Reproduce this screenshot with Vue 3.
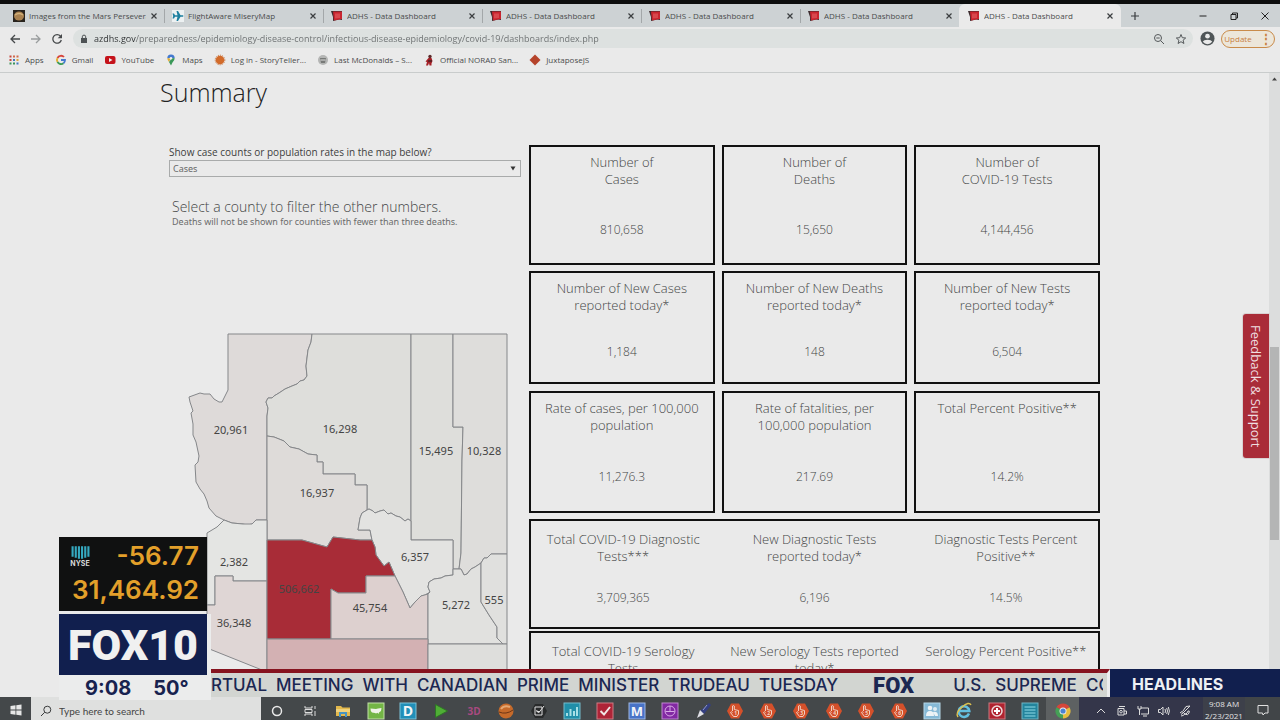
<script setup>
import { ref } from 'vue'

const tabs = [
  { title: 'Images from the Mars Persevera', icon: 'mars' },
  { title: 'FlightAware MiseryMap', icon: 'plane' },
  { title: 'ADHS - Data Dashboard', icon: 'adhs' },
  { title: 'ADHS - Data Dashboard', icon: 'adhs' },
  { title: 'ADHS - Data Dashboard', icon: 'adhs' },
  { title: 'ADHS - Data Dashboard', icon: 'adhs' },
  { title: 'ADHS - Data Dashboard', icon: 'adhs', active: true },
]

const url = ref('azdhs.gov/preparedness/epidemiology-disease-control/infectious-disease-epidemiology/covid-19/dashboards/index.php')

const bookmarks = [
  { title: 'Apps', icon: 'apps' },
  { title: 'Gmail', icon: 'google' },
  { title: 'YouTube', icon: 'youtube' },
  { title: 'Maps', icon: 'maps' },
  { title: 'Log in - StoryTeller...', icon: 'story' },
  { title: 'Last McDonalds – S...', icon: 'mcd' },
  { title: 'Official NORAD San...', icon: 'norad' },
  { title: 'JuxtaposeJS', icon: 'juxta' },
]

const measure = ref('Cases')

const rows = [
  {
    name: 'totals',
    cards: [
      { label: ['Number of', 'Cases'], value: '810,658' },
      { label: ['Number of', 'Deaths'], value: '15,650' },
      { label: ['Number of', 'COVID-19 Tests'], value: '4,144,456' },
    ],
  },
  {
    name: 'today',
    cards: [
      { label: ['Number of New Cases', 'reported today*'], value: '1,184' },
      { label: ['Number of New Deaths', 'reported today*'], value: '148' },
      { label: ['Number of New Tests', 'reported today*'], value: '6,504' },
    ],
  },
  {
    name: 'rates',
    cards: [
      { label: ['Rate of cases, per 100,000', 'population'], value: '11,276.3' },
      { label: ['Rate of fatalities, per', '100,000 population'], value: '217.69' },
      { label: ['Total Percent Positive**'], value: '14.2%' },
    ],
  },
]

const groups = [
  [
    { label: ['Total COVID-19 Diagnostic', 'Tests***'], value: '3,709,365' },
    { label: ['New Diagnostic Tests', 'reported today*'], value: '6,196' },
    { label: ['Diagnostic Tests Percent', 'Positive**'], value: '14.5%' },
  ],
  [
    { label: ['Total COVID-19 Serology', 'Tests'], value: '' },
    { label: ['New Serology Tests reported', 'today*'], value: '' },
    { label: ['Serology Percent Positive**'], value: '' },
  ],
]

const counties = [
  { name: 'Mohave', fill: '#dedad9', value: '20,961', x: 231, y: 434, d: 'M228 334H312L311 342 308 350 307 358 306 366 307 376 304 380 300 381 297 384 292 386 285 389 279 393 274 396 272 398 268 398 266 402 268 408 267 416V520H256L252 524 247 525 243 524 232 523 224 520 216 516 209 508 207 501 204 494 200 489 196 482 195 465 198 462 199 456 196 442 193 435 193 424 191 413 193 411 190 402 189 397 200 393 204 394 210 394 214 399 219 402H222L225 396 228 390Z' },
  { name: 'Coconino', fill: '#dededb', value: '16,298', x: 340, y: 433, d: 'M312 334H411V521L408 519 405 521 400 517 396 516 391 513 388 514 384 510 380 511 375 513 373 511 369 509 367 510V485H355V474H323V462H317V455L308 454 299 449 290 447 284 441 274 437 267 436V416L268 408 266 402 268 398 272 398 274 396 279 393 285 389 292 386 297 384 300 381 304 380 307 376 306 366 307 358 308 350 311 342Z' },
  { name: 'Navajo', fill: '#dededb', value: '15,495', x: 436, y: 455, d: 'M411 334H453V427H463L462 460 461 553 459 569H453V540H411Z' },
  { name: 'Apache', fill: '#dedddb', value: '10,328', x: 484, y: 455, d: 'M453 334H507V554H491L487 558 484 558 481 563 475 567 471 569 467 574 464 575 461 569 459 569 461 553 462 460 463 427H453Z' },
  { name: 'Yavapai', fill: '#dedbd9', value: '16,937', x: 317, y: 497, d: 'M267 436L274 437 284 441 290 447 299 449 308 454 317 455V462H323V474H355V485H367V510L362 513 360 518 358 530H370L372 540H360L333 537 327 547 302 540H267Z' },
  { name: 'Gila', fill: '#e3e3e1', value: '6,357', x: 415, y: 561, d: 'M367 510L369 509 373 511 375 513 380 511 384 510 388 514 391 513 396 516 400 517 405 521 408 519 411 521V540H453V575L445 576 441 578 434 579 429 582 428 587 430 592 425 595 421 596 417 600 415 602 410 608 403 592 395 576 389 562 384 566 376 555 375 547 372 540 370 530H358L360 518 362 513Z' },
  { name: 'La Paz', fill: '#e4e5e3', value: '2,382', x: 234, y: 566, d: 'M224 520L232 523 243 524 252 524 256 520H267V581H233V576H215V605H207V533L217 527Z' },
  { name: 'Yuma', fill: '#dfd6d5', value: '36,348', x: 234, y: 627, d: 'M215 576H233V581H267V672L207 648V605H215Z' },
  { name: 'Maricopa', fill: '#a82c37', value: '506,662', x: 299, y: 593, d: 'M267 540H302L327 547 333 537 360 540H372L375 547 376 555 384 566 389 562 395 576H366V593H338L331 589V639H267Z' },
  { name: 'Pinal', fill: '#ddd0cf', value: '45,754', x: 370, y: 612, d: 'M331 589L338 593H366V576H395L403 592 410 608 415 602 417 600 421 596 428 594V639H331Z' },
  { name: 'Graham', fill: '#e1e1df', value: '5,272', x: 456, y: 609, d: 'M428 594L430 592 428 587 429 582 434 579 441 578 445 576 453 575V569H461L464 575 467 574 471 569 475 567 481 563V602L489 615 497 627V638L503 644H428Z' },
  { name: 'Greenlee', fill: '#e0e0de', value: '555', x: 494, y: 604, d: 'M481 563L484 558 487 558 491 554H507V644H503L497 638V627L489 615 481 602Z' },
  { name: 'Pima', fill: '#d3b1b3', value: '', x: 0, y: 0, d: 'M267 639H428V680H267Z' },
  { name: 'Cochise', fill: '#dededc', value: '', x: 0, y: 0, d: 'M428 644H507V680H428Z' },
]

const apps = [
  'cortana', 'taskview', 'folder', 'map', 'dletter', 'play', 'threed', 'ball', 'check',
  'bars', 'redcheck', 'mletter', 'purple', 'pen',
  'hand1', 'hand2', 'hand3', 'hand4', 'hand5', 'hand6',
  'people', 'ie', 'medic', 'lines', 'chrome',
]

const crawl = [
  'RTUAL  MEETING  WITH  CANADIAN  PRIME  MINISTER  TRUDEAU  TUESDAY',
  'U.S.  SUPREME  CO',
]
</script>

<template>
  <div class="screen">
    <header class="tabstrip">
      <div class="tabs">
        <div v-for="(tab, i) in tabs" :key="i" class="tab" :class="{ active: tab.active }">
          <svg class="fav" viewBox="0 0 12 12" aria-hidden="true">
            <template v-if="tab.icon === 'mars'">
              <rect width="12" height="12" fill="#28231d" />
              <ellipse cx="6" cy="6" rx="5" ry="4.5" fill="#a9814f" />
              <path d="M2 5Q6 2 10 5" stroke="#d2b27c" stroke-width="1.5" fill="none" />
            </template>
            <template v-else-if="tab.icon === 'plane'">
              <rect width="12" height="12" fill="#edf1f2" />
              <path d="M.5 3.500L2 3.500 3 5.200 5.500 5.200 4.500 1H6L8.500 5.200H11Q12 6 11 6.800H8.500L6 11H4.500L5.500 6.800 3 6.800 2 8.500H.5L1.200 6Z" fill="#1d7f9f" />
            </template>
            <template v-else>
              <path d="M0 1H11V10L8 9.500 2 11 2 7Z" fill="#3c2b2e" />
              <path d="M2 1.500H11V9L3 10.500Z" fill="#c9242f" />
              <path d="M4 3.500H9V8L4 8.500Z" fill="#d8474d" />
            </template>
          </svg>
          <span class="tab-title">{{ tab.title }}</span>
          <button class="tab-close" aria-label="Close tab">
            <svg viewBox="0 0 8 8"><path d="M1.500 1.500L6.500 6.500M6.500 1.500L1.500 6.500" /></svg>
          </button>
        </div>
        <button class="new-tab" aria-label="New tab">
          <svg viewBox="0 0 10 10"><path d="M5 1V9M1 5H9" /></svg>
        </button>
      </div>
      <div class="win">
        <button aria-label="Minimize"><svg viewBox="0 0 10 10"><path d="M1.500 5H8.500" /></svg></button>
        <button aria-label="Restore"><svg viewBox="0 0 10 10"><path d="M2 3.500H7V8.500H2ZM3.500 3.500V2H8.500V7H7" /></svg></button>
        <button aria-label="Close"><svg viewBox="0 0 10 10"><path d="M1.500 1.500L8.500 8.500M8.500 1.500L1.500 8.500" /></svg></button>
      </div>
    </header>

    <div class="toolbar">
      <nav class="nav">
        <button aria-label="Back"><svg viewBox="0 0 12 12"><path d="M11 6H2M6 2L2 6L6 10" /></svg></button>
        <button class="dim" aria-label="Forward"><svg viewBox="0 0 12 12"><path d="M1 6H10M6 2L10 6L6 10" /></svg></button>
        <button aria-label="Reload"><svg viewBox="0 0 12 12"><path d="M9.500 3.200A4.300 4.300 0 1 0 10.300 7" /><path class="solid" d="M11 1V5.300H6.700Z" /></svg></button>
      </nav>
      <div class="omni">
        <svg class="lock" viewBox="0 0 8 10"><path d="M1 4H7V9H1Z" fill="#4d5254" /><path d="M2.300 4V2.800A1.700 1.700 0 0 1 5.700 2.800V4" fill="none" stroke="#4d5254" /></svg>
        <input v-model="url" class="url" type="text" aria-label="Address" spellcheck="false">
        <button aria-label="Zoom"><svg viewBox="0 0 12 12"><circle cx="5" cy="5" r="3.500" /><path d="M7.700 7.700L11 11M3.300 5H6.700" /></svg></button>
        <button aria-label="Bookmark"><svg viewBox="0 0 12 12"><path d="M6 1.500L7.300 4.700 10.700 5 8.100 7.200 8.900 10.500 6 8.700 3.100 10.500 3.900 7.200 1.300 5 4.700 4.700Z" /></svg></button>
      </div>
      <button class="avatar" aria-label="Profile">
        <svg viewBox="0 0 16 16"><circle cx="8" cy="8" r="7.500" fill="#4f5557" /><circle cx="8" cy="5.500" r="2.500" fill="#eaeaea" /><path d="M3 11.500Q4 9.200 8 9.200T13 11.500Q11 14 8 14T3 11.500Z" fill="#eaeaea" /></svg>
      </button>
      <button class="update">Update <span>⋮</span></button>
    </div>

    <nav class="bookmarks">
      <a v-for="b in bookmarks" :key="b.title" href="#">
        <svg viewBox="0 0 12 12" aria-hidden="true">
          <g v-if="b.icon === 'apps'">
            <path d="M1.500 2.500H3.500M1.500 6H3.500" stroke="#c6463d" stroke-width="2" />
            <path d="M5 2.500H7M8.500 2.500H10.500" stroke="#d06a4b" stroke-width="2" />
            <path d="M5 6H7M8.500 9.500H10.500" stroke="#4277be" stroke-width="2" />
            <path d="M1.500 9.500H3.500M5 9.500H7" stroke="#3c9458" stroke-width="2" />
            <path d="M8.500 6H10.500" stroke="#d9a63f" stroke-width="2" />
          </g>
          <g v-else-if="b.icon === 'google'" fill="none" stroke-width="1.800">
            <path d="M9 3A4 4 0 0 0 2.500 4" stroke="#d7443b" />
            <path d="M2.500 4A4 4 0 0 0 2.500 8" stroke="#e2ae2c" />
            <path d="M2.500 8A4 4 0 0 0 8.500 9.200" stroke="#3b9b56" />
            <path d="M8.500 9.200Q10 8 10 6H6" stroke="#4379cf" />
          </g>
          <g v-else-if="b.icon === 'youtube'"><rect x="1" y="2" width="10.500" height="8" rx="2" fill="#c5131b" /><path d="M5 4V8L8.500 6Z" fill="#eee" /></g>
          <g v-else-if="b.icon === 'maps'">
            <path d="M6 .5A3.700 3.700 0 0 0 2.300 4.300L9.700 4.300A3.700 3.700 0 0 0 6 .5Z" fill="#4379cf" />
            <path d="M2.300 4.200L6 4 4 8Q2.300 6 2.300 4.200Z" fill="#dfab35" />
            <path d="M9.700 4.200Q9.700 6 7.500 8.500L6 11.500 4 8 7 4Z" fill="#3a9858" />
            <circle cx="6" cy="4.200" r="1.300" fill="#eee" />
          </g>
          <g v-else-if="b.icon === 'story'"><circle cx="6" cy="6" r="4.300" fill="#d26b2b" /><circle cx="6" cy="6" r="4.800" fill="none" stroke="#c9743d" stroke-dasharray="1.200 1" /></g>
          <g v-else-if="b.icon === 'mcd'"><circle cx="6" cy="6" r="5" fill="#b4b5b4" /><path d="M3 4H9L8 9H4Z" fill="#777977" /><path d="M3.500 6H8.500" stroke="#ddd" /></g>
          <g v-else-if="b.icon === 'norad'"><path d="M5.500 4H8.500L9.500 7 8.500 9.500 8.500 11.500H6.500L6 9 5 11.500H3L4 8 2.500 7.500Z" fill="#a51f26" /><circle cx="7" cy="2.500" r="1.700" fill="#5d292a" /><path d="M5 7H9" stroke="#222" /></g>
          <path v-else d="M6 .5L11.500 6 6 11.500 .5 6Z" fill="#b5432b" />
        </svg>
        <span>{{ b.title }}</span>
      </a>
    </nav>

    <div class="page">
      <main class="content">
        <h1>Summary</h1>
        <div class="dash">
          <section class="left">
            <label for="measure">Show case counts or population rates in the map below?</label>
            <div class="select-wrap">
              <select id="measure" v-model="measure"><option>Cases</option><option>Rates</option></select>
              <svg viewBox="0 0 6 5" aria-hidden="true"><path d="M.5 .5H5.500L3 4.500Z" /></svg>
            </div>
            <div class="hint">
              <h2>Select a county to filter the other numbers.</h2>
              <p>Deaths will not be shown for counties with fewer than three deaths.</p>
            </div>
            <svg class="map" viewBox="180 330 341 350" role="img" aria-label="Cases by county">
              <path v-for="c in counties" :key="c.name" :d="c.d" :fill="c.fill" />
              <text v-for="c in counties" :key="c.name + 't'" :x="c.x" :y="c.y">{{ c.value }}</text>
            </svg>
          </section>

          <section class="right">
            <div v-for="row in rows" :key="row.name" class="row" :class="row.name">
              <article v-for="card in row.cards" :key="card.value" class="card">
                <h3><span v-for="l in card.label" :key="l">{{ l }}</span></h3>
                <p>{{ card.value }}</p>
              </article>
            </div>
            <div v-for="(g, i) in groups" :key="i" class="group">
              <article v-for="card in g" :key="card.label[0]">
                <h3><span v-for="l in card.label" :key="l">{{ l }}</span></h3>
                <p>{{ card.value }}</p>
              </article>
            </div>
          </section>
        </div>
      </main>
      <div class="scroll">
        <svg viewBox="0 0 11 11" aria-hidden="true"><path d="M3 7.500H8L5.500 4.500Z" fill="#444" /></svg>
        <div class="thumb"></div>
      </div>
      <button class="feedback">Feedback &amp; Support</button>
    </div>

    <footer class="taskbar">
      <button class="start" aria-label="Start">
        <svg viewBox="0 0 12 12"><path d="M.5 2L5.500 1.300V5.600H.5ZM6.300 1.200L11.500 .5V5.600H6.300ZM.5 6.400H5.500V10.700L.5 10ZM6.300 6.400H11.500V11.500L6.300 10.800Z" fill="#e6e6e6" /></svg>
      </button>
      <label class="search">
        <svg viewBox="0 0 12 12"><circle cx="7.300" cy="4.700" r="3.500" /><path d="M4.700 7.300L1 11" /></svg>
        <input type="text" placeholder="Type here to search" aria-label="Search">
      </label>
      <div class="apps">
        <button v-for="a in apps" :key="a" :class="{ open: a === 'chrome' }" :aria-label="a">
          <svg viewBox="0 0 16 16">
            <circle v-if="a === 'cortana'" cx="8" cy="8" r="4.500" fill="none" stroke="#e8e8e8" stroke-width="1.500" />
            <path v-else-if="a === 'taskview'" d="M3 3V5H10V3M3 13V11H10V13M3 6.500H10V9.500H3ZM13 3V6M13 8V13" fill="none" stroke="#dcdcdc" />
            <g v-else-if="a === 'folder'"><path d="M1 3H6L7.500 4.500H15V13H1Z" fill="#e2b84c" /><path d="M1 6H15V9H1Z" fill="#f0d27c" /><path d="M4 14V9H12V14H10V11H6V14Z" fill="#4693c2" /></g>
            <g v-else-if="a === 'map'"><rect width="16" height="16" fill="#73b545" stroke="#c2dfa8" /><path d="M2.500 5.500L8 6 10 5.500 13.500 5 13 8 11 9.500 10.500 11 9.500 9.800 8 10.500 7 10 4 9.500 2.800 8Z" fill="#f0f3e8" /></g>
            <g v-else-if="a === 'dletter'"><rect width="16" height="16" fill="#218fb8" stroke="#7ac1d8" /><text x="8" y="13" font-size="14" fill="#f2f6f7">D</text></g>
            <path v-else-if="a === 'play'" d="M2.500 1.500L14.500 8 2.500 14.500Z" fill="#4fae35" stroke="#2e7526" />
            <text v-else-if="a === 'threed'" x="8" y="12" font-size="10" fill="#a84a80">3D</text>
            <g v-else-if="a === 'ball'"><circle cx="8" cy="8" r="7.500" fill="#c66a2a" /><path d="M3 6Q6 2 12 4" stroke="#e5a873" stroke-width="2" fill="none" /><path d="M1 9Q8 12 15 7" stroke="#6d3515" fill="none" /></g>
            <g v-else-if="a === 'check'"><path d="M4 1H12L16 8 12 15H4L0 8Z" fill="#292b2c" /><path d="M4 4H11V12H4ZM5.500 7L7.500 10 13 3M5.500 8.500H9" fill="none" stroke="#ddd" /></g>
            <g v-else-if="a === 'bars'"><rect width="16" height="16" fill="#218fa9" stroke="#75bccb" /><path d="M3 13V10M6.500 13V6M10 13V8M13 13V4" stroke="#a6e0e6" stroke-width="2" /></g>
            <g v-else-if="a === 'redcheck'"><rect width="16" height="16" fill="#ae2437" stroke="#cf7a83" /><path d="M3.500 8L7 11.500 13 4" fill="none" stroke="#f2e6e6" stroke-width="2" /></g>
            <g v-else-if="a === 'mletter'"><rect width="16" height="16" fill="#4873c7" stroke="#9db7e6" /><text x="8" y="13" font-size="13" fill="#f2f4f8">M</text></g>
            <g v-else-if="a === 'purple'"><rect width="16" height="16" fill="#8229a3" stroke="#bf85d2" /><circle cx="8" cy="8" r="5" fill="none" stroke="#d8a9e6" /><path d="M8 3V9M3.500 8.500H12.500" stroke="#d8a9e6" fill="none" /></g>
            <g v-else-if="a === 'pen'"><path d="M14 0L16 2 9 11 5 8Z" fill="#343f80" /><path d="M5 7L9 11 2 15Z" fill="#dfe0e6" /><path d="M12 2L8 7" stroke="#8e98c6" /></g>
            <g v-else-if="a.startsWith('hand')">
              <path d="M4 .5H12L16 8 12 15.500H4L0 8Z" fill="#d4502a" />
              <path d="M5.500 8V3Q6.500 2 7.300 3V6.500L11.500 7.500V11L10 13.500H6.500L3.500 9.500Q4 8 5.500 9.500" fill="none" stroke="#f1cfc1" />
              <text x="8.800" y="11.500" font-size="5" fill="#f1cfc1">{{ a.slice(4) }}</text>
            </g>
            <g v-else-if="a === 'people'"><rect width="16" height="16" fill="#86b9d6" stroke="#b6d7e7" /><circle cx="6" cy="5" r="2.300" fill="#edf3f6" /><circle cx="11" cy="6" r="2" fill="#dfebf1" /><path d="M2 13Q2 8 6 8T10 13ZM9 9Q14 8 14 13H11Z" fill="#edf3f6" /></g>
            <g v-else-if="a === 'ie'"><path d="M13 10.500A5.300 5.300 0 1 1 13.300 8H4" fill="none" stroke="#63bfe0" stroke-width="2.500" /><path d="M2 14Q-1 10 6 4T15 2" fill="none" stroke="#dfc24d" stroke-width="1.500" /></g>
            <g v-else-if="a === 'medic'"><rect width="16" height="16" fill="#b0232f" stroke="#cd7880" /><circle cx="8" cy="8" r="5" fill="none" stroke="#efd9da" stroke-width="1.500" /><path d="M8 5V11M5 8H11" stroke="#fff" stroke-width="2" /></g>
            <g v-else-if="a === 'lines'"><rect width="16" height="16" fill="#23849c" stroke="#6fb4c3" /><path d="M2.500 4H13.500M2.500 7H13.500M2.500 10H13.500M2.500 13H13.500" stroke="#8fdbe8" /></g>
            <g v-else>
              <path d="M8 8L1.500 4.200A7.500 7.500 0 0 1 14.500 4.200Z" fill="#d5463a" />
              <path d="M8 8L14.500 4.200A7.500 7.500 0 0 1 8 15.500Z" fill="#e6bd3d" />
              <path d="M8 8V15.500A7.500 7.500 0 0 1 1.500 4.200Z" fill="#45a056" />
              <circle cx="8" cy="8" r="3.500" fill="#ececec" /><circle cx="8" cy="8" r="2.600" fill="#4a83d2" />
            </g>
          </svg>
        </button>
      </div>
      <div class="tray">
        <svg viewBox="0 0 12 12"><path d="M2 8L6 4 10 8" /></svg>
        <svg viewBox="0 0 12 12"><path d="M2 3.500H8V10H2ZM8 6H10.500V9H8M3 1.500H9" /><circle cx="5" cy="6.700" r="1.300" /></svg>
        <svg viewBox="0 0 12 12"><path d="M4 3H11.500V9H4M6 11H10M1 1V4H4V1M2.500 4V10" /></svg>
        <svg viewBox="0 0 12 12"><path d="M.5 4.500H2.500L5 2V10L2.500 7.500H.5ZM7 4Q8 6 7 8M8.700 3Q10.300 6 8.700 9M10.300 2Q12.500 6 10.300 10" /></svg>
        <svg viewBox="0 0 12 12"><path d="M11 1L4 8 2 9.500M11 1L7 1.500 4 6M1 8Q3 5 5 8T9 6Q11 5 10 8T6 9Q4 11 2 11" /></svg>
      </div>
      <div class="clock"><span>9:08 AM</span><span>2/23/2021</span></div>
      <button class="notes" aria-label="Notifications">
        <svg viewBox="0 0 12 12"><path d="M1 1.500H11V9H8L6 11 5.500 9H1Z" /></svg>
      </button>
    </footer>

    <aside class="bug">
      <div class="market">
        <div class="nyse">
          <svg viewBox="0 0 18 12" aria-hidden="true">
            <path d="M1.500 0V10M4.500 0V11M7.500 0V12M10.500 0V12M13.500 0V11M16.500 0V10" stroke="#35a9c0" stroke-width="2" />
          </svg>
          <span>NYSE</span>
        </div>
        <div class="figures"><span>-56.77</span><span>31,464.92</span></div>
      </div>
      <div class="station">
        <div class="logo">FOX10</div>
        <div class="time"><span>9:08</span><span>50°</span></div>
      </div>
    </aside>

    <aside class="ticker">
      <div class="crawl">
        <div class="track">
          <span>{{ crawl[0] }}</span>
          <b>FOX</b>
          <span>{{ crawl[1] }}</span>
        </div>
      </div>
      <div class="headlines">HEADLINES</div>
    </aside>
  </div>
</template>

<style>
body { background: #eaeaea; }
</style>

<style scoped>
* { box-sizing: border-box; }
h1, h2, h3, p { margin: 0; font-weight: 400; }
button { border: 0; padding: 0; background: none; font: inherit; color: inherit; display: flex; align-items: center; justify-content: center; }
a { color: inherit; text-decoration: none; }
svg { display: block; flex: none; }

.screen {
  position: relative;
  height: 100vh;
  display: flex;
  flex-direction: column;
  overflow: hidden;
  background: #eaeaea;
  color: #4a4c4c;
  font-family: "Open Sans", "Noto Sans", sans-serif;
  font-size: 8px;
}

.tabstrip { display: flex; justify-content: space-between; height: 27px; flex: none; background: #cdd2d4; border-top: 4px solid #0d0e0e; }
.tabs { display: flex; flex: 1; padding-left: 6px; min-width: 0; }
.tab { flex: 0 1 159px; min-width: 0; display: flex; align-items: center; gap: 4px; padding-left: 7px; }
.tab::after { content: ""; width: 1px; height: 14px; margin-left: 2px; background: #a3a7a9; }
.tab.active { background: #eaeaea; border-radius: 6px 6px 0 0; margin-left: -1px; padding-left: 9px; flex-basis: 162px; }
.tab.active::after { background: none; }
.fav { width: 12px; height: 12px; }
.tab-title { flex: 1; min-width: 0; overflow: hidden; white-space: nowrap; }
.tab-close svg { width: 8px; height: 8px; }
.tab-close path, .new-tab path { stroke: #3b3e40; stroke-width: 1.2; fill: none; }
.new-tab { width: 28px; }
.new-tab svg { width: 10px; height: 10px; }
.win { display: flex; width: 92px; }
.win button { flex: 1; }
.win svg { width: 10px; height: 10px; }
.win path { stroke: #222; fill: none; }

.toolbar { display: flex; align-items: center; height: 23px; flex: none; padding-right: 5px; }
.nav { display: flex; width: 73px; padding-left: 4px; }
.nav button { width: 21px; }
.nav svg { width: 12px; height: 12px; }
.nav path { fill: none; stroke: #46494b; stroke-width: 1.3; }
.nav .dim path { stroke: #9a9d9e; }
.nav .solid { fill: #46494b; stroke: none; }
.omni { display: flex; align-items: center; flex: 1; height: 19px; border-radius: 10px; background: #dde1e0; padding: 0 4px 0 7px; gap: 6px; }
.omni button { width: 16px; }
.omni button svg { width: 12px; height: 12px; fill: none; stroke: #55595b; }
.lock { width: 8px; height: 10px; }
.url { flex: 1; min-width: 0; border: 0; padding: 0; outline: 0; font: 9px "Open Sans", sans-serif; color: transparent; background: linear-gradient(90deg, #2d3031 42px, #6b6f70 42px); -webkit-background-clip: text; background-clip: text; }
.avatar { width: 28px; }
.avatar svg { width: 15px; height: 15px; }
.update { width: 54px; height: 18px; gap: 8px; border: 1px solid #c98b4a; border-radius: 9px; background: #ece6da; color: #c8803f; }
.update span { font-size: 12px; line-height: 12px; font-weight: 700; }

.bookmarks { display: flex; align-items: center; height: 23px; flex: none; gap: 11px; padding: 0 8px 3px; border-bottom: 1px solid #c9cccc; }
.bookmarks a { display: flex; align-items: center; gap: 5px; white-space: nowrap; }
.bookmarks svg { width: 12px; height: 12px; }

.page { position: relative; display: flex; flex: 1; min-height: 0; }
.content { flex: 1; min-width: 0; padding: 0 169px 0 160px; overflow: hidden; }
h1 { font-size: 25px; line-height: 36px; font-weight: 300; color: #222; padding: 1px 0 35px; }
.dash { display: grid; grid-template-columns: 369fr 571fr; color: #444646; }
.left { padding: 0 8px 0 9px; }
.left label { display: block; font-size: 10px; line-height: 15px; font-weight: 500; color: #3e4040; }
.select-wrap { position: relative; }
.left select { display: block; width: 100%; height: 17px; appearance: none; border: 1px solid #a9abab; border-radius: 0; background: none; padding: 0 3px; font: 9px "Noto Sans", sans-serif; color: #666868; }
.select-wrap svg { position: absolute; right: 5px; top: 6px; width: 6px; height: 5px; fill: #333; }
.hint { padding: 21px 3px 0; height: 153px; }
h2 { font-size: 14px; line-height: 17px; font-weight: 300; }
.hint p { font: 9px/13px "Noto Sans", sans-serif; color: #6a6c6c; }
.map { width: calc(100% - 11px); margin-left: 11px; overflow: visible; }
.map path { stroke: #85878a; stroke-width: 1; }
.map text { text-anchor: middle; font-size: 11px; fill: #444; font-family: "Noto Sans", sans-serif; }

.row { display: grid; grid-template-columns: repeat(3, 1fr); gap: 7px; margin-bottom: 6px; }
.card { border: 2px solid #111; padding-top: 7px; text-align: center; }
.totals { height: 120px; }
.today { height: 113px; margin-bottom: 7px; }
.rates { height: 122px; }
h3 { font-size: 13px; line-height: 17px; min-height: 34px; font-weight: 300; }
h3 span { display: block; white-space: nowrap; }
.right p { font-size: 12px; line-height: 18px; padding-top: 33px; font-weight: 300; }
.right .today p { padding-top: 29px; }
.right .rates p { padding-top: 34px; }
.right .group p { padding-top: 24px; }
.group { display: grid; grid-template-columns: repeat(3, 1fr); gap: 7px; height: 110px; margin-bottom: 2px; border: 2px solid #111; padding-top: 10px; text-align: center; }

.scroll { width: 11px; background: #dcdddd; }
.scroll svg { width: 11px; height: 11px; }
.thumb { height: 31%; margin: 263px 1px 0; background: #b4b5b5; }
.feedback { position: absolute; right: 11px; top: 241px; width: 26px; height: 144px; writing-mode: vertical-rl; background: #a92c38; color: #f0dfe0; font-size: 13px; font-weight: 500; border-radius: 3px 0 0 3px; box-shadow: 0 0 0 1px #d9d2d2; }

.taskbar { display: flex; height: 23px; flex: none; background: #44484a; overflow: hidden; }
.start { width: 31px; padding-top: 3px; }
.start svg { width: 12px; height: 12px; }
.search { display: flex; align-items: center; gap: 7px; width: 230px; padding: 4px 0 0 9px; background: #dfe0df; }
.search svg { width: 12px; height: 12px; fill: none; stroke: #3a3c3d; }
.search input { flex: 1; min-width: 0; border: 0; outline: 0; padding: 0; background: none; font: 10px Lato, sans-serif; }
.search input::placeholder { color: #444; opacity: 1; }
.apps { display: flex; flex: 1; }
.apps button { flex: 1; padding-top: 4px; }
.apps .open { background: #5d6162; }
.apps svg { width: 16px; height: 16px; overflow: visible; font-family: "Open Sans", sans-serif; font-weight: 700; text-anchor: middle; }
.tray { display: flex; align-items: center; gap: 9px; padding: 4px 0 0 16px; width: 124px; background: #34364a; }
.tray svg { width: 12px; height: 12px; fill: none; stroke: #dcdcdc; }
.clock { width: 42px; display: flex; flex-direction: column; align-items: center; padding-top: 1px; font-size: 8px; line-height: 12px; color: #e4e4e4; background: #3d404a; }
.notes { width: 35px; padding-top: 3px; background: #414548; }
.notes svg { width: 12px; height: 12px; fill: none; stroke: #e0e0e0; }

.bug { position: absolute; left: 59px; bottom: 20px; width: 152px; font-family: Inter, sans-serif; }
.market { position: relative; width: 148px; height: 74px; background: #101111; padding: 2px 8px 0 11px; margin-bottom: 3px; }
.nyse { width: 20px; padding-top: 7px; color: #d7dada; font-size: 7px; font-weight: 700; display: flex; flex-direction: column; align-items: center; line-height: 10px; }
.nyse svg { width: 19px; height: 13px; }
.figures { position: absolute; right: 8px; top: 2px; display: flex; flex-direction: column; align-items: flex-end; font-size: 26px; line-height: 34px; font-weight: 600; color: #e3a02a; }
.station { background: #ebecec; height: 86px; }
.logo { width: 148px; height: 61px; background: #111f4e; color: #f0f0f0; font: 900 43px/63px Roboto, sans-serif; text-align: center; }
.time { display: flex; gap: 22px; padding-left: 26px; font-size: 20px; line-height: 27px; font-weight: 700; color: #17224f; }

.ticker { position: absolute; left: 211px; right: 0; bottom: 23px; height: 28px; display: flex; font-family: Inter, sans-serif; }
.crawl { flex: 1; min-width: 0; display: flex; background: #d2d5d1; border-top: 4px solid #86131f; border-right: 3px solid #ecedee; padding-right: 4px; }
.track { flex: 1; min-width: 0; overflow: hidden; display: flex; align-items: center; color: #1b2752; font-size: 17px; font-weight: 500; white-space: pre; }
.track b { font: 900 22px Roboto, sans-serif; margin: 0 39px 0 35px; }
.headlines { width: 170px; background: #111f4e; color: #eef0f4; font-size: 16px; line-height: 30px; font-weight: 700; padding-left: 22px; }
</style>
